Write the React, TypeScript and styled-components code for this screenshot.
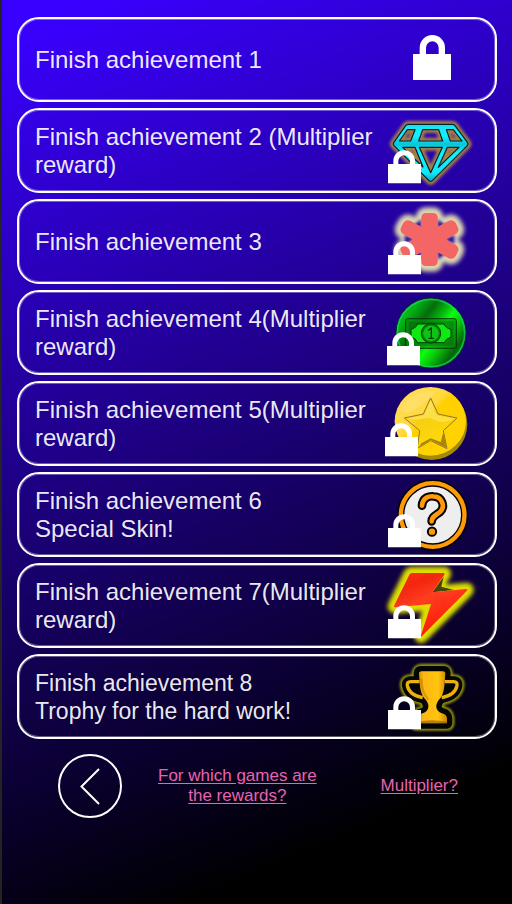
import React from "react";
import styled, { createGlobalStyle } from "styled-components";

const GlobalStyle = createGlobalStyle`
  * { box-sizing: border-box; }
  body { margin: 0; background: #000; }
`;

const Page = styled.main`
  min-height: 100vh;
  padding: 17px 15px;
  border-left: 2px solid #242424;
  background: linear-gradient(157deg, #3a00ff 3%, #000 88%);
  font-family: "Liberation Sans", Arial, sans-serif;
`;

const List = styled.ul`
  display: flex;
  flex-direction: column;
  gap: 6px;
  margin: 0;
  padding: 0;
  list-style: none;
`;

const Card = styled.li`
  display: flex;
  align-items: center;
  min-height: 85px;
  padding-left: 16px;
  border: 2px solid #fff;
  border-radius: 22px;
  box-shadow: inset 0 0 0 1px rgba(255, 255, 255, 0.35);
`;

const Title = styled.p<{ $small?: boolean }>`
  flex: 1;
  min-width: 0;
  margin: 0;
  color: rgba(255, 255, 255, 0.93);
  font-size: ${(p) => (p.$small ? 23 : 24)}px;
  line-height: 28px;
  white-space: pre-line;
`;

const Art = styled.svg`
  flex: none;
  width: 115px;
  height: 81px;
  overflow: visible;
`;

const Halo = styled.g<{ $color: string; $spread: number; $blur: number }>`
  fill: none;
  stroke: ${(p) => p.$color};
  stroke-width: ${(p) => p.$spread}px;
  stroke-linejoin: round;
  filter: blur(${(p) => p.$blur}px);
`;

const Footer = styled.nav`
  display: flex;
  align-items: center;
  gap: 36px;
  padding: 15px 39px 0 41px;
`;

const BackButton = styled.button`
  flex: none;
  width: 64px;
  height: 64px;
  padding: 0;
  border: 0;
  background: none;
  cursor: pointer;

  svg { display: block; }
`;

const TextLink = styled.a`
  color: #e864ae;
  font-size: 17px;
  line-height: 20px;
  text-align: center;
  white-space: pre-line;
  text-decoration: underline;
  text-underline-offset: 2px;

  &:last-child { margin-left: auto; }
`;

function Lock({ x = 0 }: { x?: number }) {
  return (
    <g transform={`translate(${x} 0)`}>
      <path d="M47.500 180V168a25 25 0 0 1 50 0V180" fill="none" stroke="#fff" strokeWidth="15" />
      <path d="M24 177H123V235H24Z" fill="#fff" />
    </g>
  );
}

function BigLock() {
  return (
    <g>
      <path d="M128.500 124V101a28.500 28.500 0 0 1 57 0V124" fill="none" stroke="#fff" strokeWidth="19" />
      <path d="M99 120H213V198H99Z" fill="#fff" />
    </g>
  );
}

const gem =
  "M84 58H218Q222 58 225 62L263 113Q266 118 262 122L157 227Q152 232 147 227L42 122Q38 118 41 113L77 62Q80 58 84 58Z M82 74L58 108H92L105 74Z M128 74L116 108H188L176 74Z M199 74L211 108H246L220 74Z M68 127L129 186L105 127Z M118 127L152 203L187 127Z M202 127L175 187L237 127Z";

function Diamond() {
  return (
    <g>
      <defs>
        <linearGradient id="gem" x1="0" y1="0" x2="0" y2="1">
          <stop offset="0" stopColor="#18dff0" />
          <stop offset=".2" stopColor="#10f4ff" />
          <stop offset=".35" stopColor="#08c6d8" />
          <stop offset=".5" stopColor="#10f2ff" />
          <stop offset=".85" stopColor="#10e8fa" />
          <stop offset="1" stopColor="#08a8bc" />
        </linearGradient>
      </defs>
      <Halo $color="rgba(178,142,60,.9)" $spread={20} $blur={4}>
        <path d={gem} />
      </Halo>
      <path d={gem} fill="url(#gem)" fillRule="evenodd" stroke="#061c28" strokeWidth="3.500" strokeLinejoin="round" />
    </g>
  );
}

function AsteriskArms() {
  return (
    <>
      <rect x="124" y="51" width="49" height="159" rx="13" />
      <rect x="126" y="38" width="45" height="185" rx="15" transform="rotate(62 148.500 130.500)" />
      <rect x="126" y="38" width="45" height="185" rx="15" transform="rotate(-62 148.500 130.500)" />
    </>
  );
}

const NotchShade = styled.g`
  fill: #2a0aa0;
  filter: blur(4px);
`;

function Asterisk() {
  return (
    <g>
      <Halo $color="#dcd6b2" $spread={34} $blur={7}>
        <AsteriskArms />
      </Halo>
      <NotchShade>
        <path d="M124 70V106L98 90Z" />
        <path d="M173 70V106L199 90Z" />
        <path d="M124 191V155L98 171Z" />
        <path d="M173 191V155L199 171Z" />
        <path d="M104 130L74 117V144Z" />
        <path d="M193 130L223 117V144Z" />
      </NotchShade>
      <g fill="#f46565">
        <AsteriskArms />
      </g>
    </g>
  );
}

function Cash() {
  return (
    <g>
      <defs>
        <linearGradient id="cash" x1="0" y1=".1" x2="1" y2=".85">
          <stop offset="0" stopColor="#00c020" />
          <stop offset=".18" stopColor="#04b414" />
          <stop offset=".35" stopColor="#046c0c" />
          <stop offset=".48" stopColor="#06b60e" />
          <stop offset=".58" stopColor="#0bff0b" />
          <stop offset=".7" stopColor="#08c40a" />
          <stop offset=".85" stopColor="#046408" />
          <stop offset="1" stopColor="#08bc30" />
        </linearGradient>
      </defs>
      <circle cx="153" cy="138" r="105" fill="url(#cash)" stroke="#022c12" strokeWidth="3" />
      <circle cx="153" cy="138" r="101" fill="none" stroke="#12d968" strokeOpacity=".7" strokeWidth="5" />
      <g stroke="#013c05" strokeWidth="3" strokeLinejoin="round">
        <rect x="77" y="95" width="152" height="89" rx="6" fill="#067b0c" fillOpacity=".45" />
        <rect x="84" y="102" width="138" height="75" rx="3" fill="#056b0a" fillOpacity=".5" stroke="#0a9e13" strokeWidth="2" />
        <path d="M112 111H193Q196 123 213 127V151Q198 154 193 167H112Q109 154 93 151V127Q109 123 112 111Z" fill="#10e813" />
        <circle cx="153" cy="139" r="29" fill="#07850b" />
        <circle cx="153" cy="139" r="23" fill="#0fc314" stroke="none" />
        <path d="M144 130L154 123V154M145 154H162" fill="none" strokeWidth="4" />
      </g>
    </g>
  );
}

function GoldStar() {
  return (
    <g>
      <defs>
        <linearGradient id="gold" x1="0" y1="0" x2="1" y2="1">
          <stop offset="0" stopColor="#ffdd64" />
          <stop offset=".4" stopColor="#ffd93c" />
          <stop offset=".46" stopColor="#ffd000" />
          <stop offset="1" stopColor="#ffd400" />
        </linearGradient>
        <linearGradient id="star" x1="0" y1="0" x2=".7" y2="1">
          <stop offset="0" stopColor="#ffe964" />
          <stop offset=".45" stopColor="#f8cf12" />
          <stop offset="1" stopColor="#ffdb08" />
        </linearGradient>
      </defs>
      <circle cx="155" cy="139" r="107" fill="#a18b05" />
      <ellipse cx="151" cy="130" rx="107" ry="103" fill="url(#gold)" />
      <path d="M60 96Q98 34 168 39Q132 82 84 105Z" fill="#ffe58b" opacity=".4" />
      <path d="M152 60L174 108L231 120L190 158L201 212L152 188L112 211L119 158L73 120L130 108Z" fill="url(#star)" stroke="#94762a" strokeWidth="3" strokeLinejoin="round" />
      <path d="M152 67L170 112L222 122Q190 136 174 130Q154 120 143 119Q112 128 84 122L132 112Z" fill="#fff08c" opacity=".45" />
      <path d="M117 207L124 196L152 181L182 192L190 162L199 209L152 186Z" fill="#a88603" />
    </g>
  );
}

function Question() {
  return (
    <g fill="none" strokeLinecap="round" strokeLinejoin="round">
      <circle cx="158" cy="138" r="107" fill="#050505" />
      <circle cx="158" cy="138" r="94" fill="#eee" stroke="#050505" strokeWidth="18" />
      <circle cx="158" cy="138" r="95.500" stroke="#ff9b08" strokeWidth="13" />
      <path d="M126 110C128 84 149 81 160 82C187 83 197 113 180 129C166 140 155 143 155 157" stroke="#050505" strokeWidth="26" />
      <path d="M126 110C128 84 149 81 160 82C187 83 197 113 180 129C166 140 155 143 155 157" stroke="#ff9b08" strokeWidth="14" />
      <circle cx="156" cy="188" r="12.500" fill="#ff9b08" stroke="#050505" strokeWidth="6" />
    </g>
  );
}

const bolt =
  "M96 39H191Q196 39 193 44L157 97L258 87Q265 87 260 93L125 229Q121 231 123 226L153 132L47 142Q40 142 43 136L88 44Q91 39 96 39Z";

function Bolt() {
  return (
    <g>
      <defs>
        <linearGradient id="bolt" x1="0" y1="0" x2=".5" y2="1">
          <stop offset="0" stopColor="#ff3018" />
          <stop offset=".25" stopColor="#f5260e" />
          <stop offset=".5" stopColor="#ff3e22" />
          <stop offset="1" stopColor="#ff1600" />
        </linearGradient>
      </defs>
      <Halo $color="#dede00" $spread={38} $blur={7}>
        <path d={bolt} />
      </Halo>
      <path d="M191 50L157 97L222 90L184 80Z" fill="#16100a" opacity=".75" />
      <path d={bolt} fill="url(#bolt)" />
      <g fill="none" stroke="#b92510" strokeWidth="1" opacity=".5">
        <circle cx="144" cy="56" r="8" />
        <circle cx="144" cy="56" r="15" />
        <circle cx="76" cy="119" r="9" />
        <circle cx="76" cy="119" r="17" />
        <circle cx="180" cy="120" r="10" />
        <circle cx="180" cy="120" r="18" />
      </g>
    </g>
  );
}

const cup =
  "M117 66Q118 61 124 61H189Q195 61 196 66L194 96Q192 128 181 142Q168 154 169 168Q170 181 186 187Q200 190 201 202V217H112V202Q113 190 128 187Q144 181 145 168Q146 154 133 142Q121 128 119 96Z";
const handles = "M119 92H92Q80 92 82 104Q88 133 128 140M194 92H221Q233 92 231 104Q225 133 185 140";

function Trophy() {
  return (
    <g>
      <defs>
        <linearGradient id="cup" x1="0" y1="0" x2="1" y2="0">
          <stop offset="0" stopColor="#c57e08" />
          <stop offset=".2" stopColor="#ffb70f" />
          <stop offset=".45" stopColor="#ffbd12" />
          <stop offset=".7" stopColor="#ffc50c" />
          <stop offset="1" stopColor="#c88504" />
        </linearGradient>
      </defs>
      <Halo $color="#8f8f08" $spread={45} $blur={3}>
        <path d={cup} />
        <path d={handles} />
      </Halo>
      <g fill="#050505" stroke="#050505" strokeWidth="32" strokeLinejoin="round">
        <path d={cup} />
        <path d={handles} />
      </g>
      <path d={handles} fill="none" stroke="#eeb00b" strokeWidth="10" />
      <path d={cup} fill="url(#cup)" />
      <path d="M124 83Q125 126 145 145" fill="none" stroke="#855406" strokeWidth="7" opacity=".3" />
      <path d="M115 212Q155 203 200 212V217H112Z" fill="#6c4303" opacity=".5" />
    </g>
  );
}

const achievements: { title: string; art?: React.ReactNode; lockX?: number; small?: boolean }[] = [
  { title: "Finish achievement 1" },
  { title: "Finish achievement 2 (Multiplier reward)", art: <Diamond /> },
  { title: "Finish achievement 3", art: <Asterisk /> },
  { title: "Finish achievement 4(Multiplier reward)", art: <Cash />, lockX: -3 },
  { title: "Finish achievement 5(Multiplier reward)", art: <GoldStar />, lockX: -9 },
  { title: "Finish achievement 6\nSpecial Skin!", art: <Question /> },
  { title: "Finish achievement 7(Multiplier reward)", art: <Bolt /> },
  { title: "Finish achievement 8\nTrophy for the hard work!", art: <Trophy />, small: true },
];

export default function App() {
  return (
    <>
      <GlobalStyle />
      <Page>
        <List>
          {achievements.map((item) => (
            <Card key={item.title}>
              <Title $small={item.small}>{item.title}</Title>
              <Art viewBox="0 15 345 243" aria-hidden="true">
                {item.art}
                {item.art ? <Lock x={item.lockX} /> : <BigLock />}
              </Art>
            </Card>
          ))}
        </List>
        <Footer>
          <BackButton type="button" aria-label="Back">
            <svg width="64" height="64" viewBox="0 0 64 64" fill="none" stroke="#fff" strokeWidth="2">
              <circle cx="32" cy="32" r="31" />
              <path d="M41 15L23.500 32.500L41 50" />
            </svg>
          </BackButton>
          <TextLink href="#games">{"For which games are\nthe rewards?"}</TextLink>
          <TextLink href="#multiplier">Multiplier?</TextLink>
        </Footer>
      </Page>
    </>
  );
}
